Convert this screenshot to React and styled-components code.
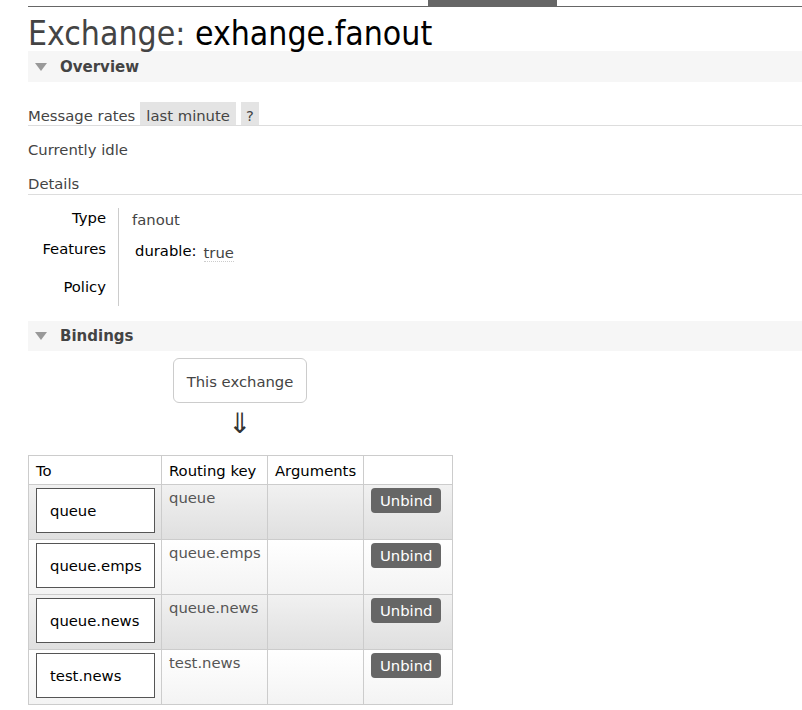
import React from 'react';
import styled, { createGlobalStyle } from 'styled-components';

const Global = createGlobalStyle`
  html, body { margin: 0; padding: 0; background: #fff; }
  body {
    font-family: "DejaVu Sans", Verdana, sans-serif;
    font-size: 14.8px;
    color: #444;
  }
  #root { overflow: hidden; }
`;

const Page = styled.div`
  padding-left: 28px;
  width: 774px;
`;

const TopBar = styled.div`
  height: 6px;
  border-bottom: 1px solid #666;
  display: flex;
`;

const ActiveTab = styled.div`
  margin-left: 400px;
  width: 129px;
  background: #666;
`;

const Title = styled.h1`
  margin: 10px 0 0;
  height: 34px;
  font-family: "DejaVu Sans Condensed", "DejaVu Sans", sans-serif;
  font-weight: normal;
  font-size: 33.5px;
  line-height: 34px;
  color: #444;
  white-space: nowrap;
`;

const Name = styled.span`
  color: #000;
`;

const SectionHeader = styled.h2`
  margin: ${p => p.$top || 0}px 0 0;
  height: ${p => p.$h || 31}px;
  display: flex;
  align-items: center;
  gap: 13px;
  padding-left: 7px;
  background: #f6f6f6;
  font-size: 15px;
  font-weight: bold;
  color: #444;
`;

const Triangle = () => (
  <svg width="12" height="8" viewBox="0 0 12 8">
    <polygon points="0,0 12,0 6,8" fill="#999" />
  </svg>
);

const RatesRow = styled.div`
  margin-top: 20px;
  display: flex;
  align-items: flex-end;
  border-bottom: 1px solid #ddd;
`;

const RatesLabel = styled.span`
  line-height: 17px;
  padding-bottom: 1px;
`;

const GrayBox = styled.span`
  margin-left: 5px;
  padding: 5px ${p => p.$pad || 6}px 1px;
  line-height: 17px;
  background: #e4e4e4;
  color: #444;
`;

const Para = styled.div`
  margin-top: ${p => p.$top}px;
  line-height: 18px;
  padding-bottom: ${p => (p.$line ? 1 : 0)}px;
  border-bottom: ${p => (p.$line ? '1px solid #ddd' : 'none')};
`;

const FactsTable = styled.table`
  margin-top: 13px;
  border-collapse: collapse;
`;

const FactRow = styled.tr`
  height: ${p => p.$h}px;
`;

const FactLabel = styled.th`
  width: 78px;
  padding: 1px 12px 0 0;
  text-align: right;
  vertical-align: top;
  font-weight: normal;
  color: #000;
  line-height: 18px;
`;

const FactValue = styled.td`
  padding: 3px 0 0 13px;
  border-left: 1px solid #ccc;
  vertical-align: top;
  line-height: 18px;
  color: #444;
`;

const FeatureKey = styled.span`
  margin-left: 3px;
  color: #000;
`;

const Abbr = styled.abbr`
  margin-left: 7px;
  position: relative;
  top: 2px;
  text-decoration: none;
  border-bottom: 1px dotted #ccc;
`;

const Source = styled.div`
  margin: 7px 0 0 145px;
  width: 134px;
  display: flex;
  flex-direction: column;
  align-items: center;
`;

const ExchangeBox = styled.div`
  box-sizing: border-box;
  width: 134px;
  height: 45px;
  border: 1px solid #ccc;
  border-radius: 6px;
  padding-top: 2px;
  display: flex;
  align-items: center;
  justify-content: center;
  color: #444;
`;

const Arrow = styled.div`
  margin-top: 6px;
  font-size: 28px;
  line-height: 30px;
  color: #333;
`;

const BindTable = styled.table`
  margin-top: 16px;
  border-collapse: collapse;
  table-layout: fixed;
  width: 424px;
`;

const HeadCell = styled.th`
  border: 1px solid #ccc;
  padding: 6px 7px 4px;
  text-align: left;
  font-weight: normal;
  color: #000;
  line-height: 18px;
  background: #fff;
`;

const BodyRow = styled.tr`
  background: ${p =>
    p.$alt
      ? 'linear-gradient(#f1f1f1, #dfdfdf)'
      : 'linear-gradient(#ffffff, #f3f3f3)'};
`;

const Cell = styled.td`
  border: 1px solid #ccc;
  padding: 3px 7px 6px;
  vertical-align: top;
  line-height: 20px;
  color: #555;
`;

const QueueBox = styled.div`
  box-sizing: border-box;
  width: 119px;
  height: 45px;
  border: 1px solid #555;
  background: #fff;
  padding-left: 13px;
  line-height: 44px;
  color: #000;
`;

const UnbindButton = styled.button`
  height: 25px;
  padding: 0 9px;
  border: none;
  border-radius: 4px;
  background: #666;
  color: #fff;
  font-family: inherit;
  font-size: 14.8px;
  line-height: 25px;
`;

const bindings = [
  { to: 'queue', key: 'queue' },
  { to: 'queue.emps', key: 'queue.emps' },
  { to: 'queue.news', key: 'queue.news' },
  { to: 'test.news', key: 'test.news' },
];

export default function App() {
  return (
    <>
      <Global />
      <Page>
        <TopBar>
          <ActiveTab />
        </TopBar>
        <Title>
          Exchange: <Name>exhange.fanout</Name>
        </Title>

        <SectionHeader>
          <Triangle />
          Overview
        </SectionHeader>

        <RatesRow>
          <RatesLabel>Message rates</RatesLabel>
          <GrayBox>last minute</GrayBox>
          <GrayBox $pad={5}>?</GrayBox>
        </RatesRow>

        <Para $top={15}>Currently idle</Para>
        <Para $top={16} $line>Details</Para>

        <FactsTable>
          <tbody>
            <FactRow $h={31}>
              <FactLabel>Type</FactLabel>
              <FactValue>fanout</FactValue>
            </FactRow>
            <FactRow $h={38}>
              <FactLabel>Features</FactLabel>
              <FactValue>
                <FeatureKey>durable:</FeatureKey>
                <Abbr title="durable">true</Abbr>
              </FactValue>
            </FactRow>
            <FactRow $h={29}>
              <FactLabel>Policy</FactLabel>
              <FactValue />
            </FactRow>
          </tbody>
        </FactsTable>

        <SectionHeader $top={15} $h={30}>
          <Triangle />
          Bindings
        </SectionHeader>

        <Source>
          <ExchangeBox>This exchange</ExchangeBox>
          <Arrow>⇓</Arrow>
        </Source>

        <BindTable>
          <colgroup>
            <col style={{ width: 133 }} />
            <col style={{ width: 106 }} />
            <col style={{ width: 96 }} />
            <col style={{ width: 89 }} />
          </colgroup>
          <thead>
            <tr>
              <HeadCell>To</HeadCell>
              <HeadCell>Routing key</HeadCell>
              <HeadCell>Arguments</HeadCell>
              <HeadCell />
            </tr>
          </thead>
          <tbody>
            {bindings.map((b, i) => (
              <BodyRow key={b.to} $alt={i % 2 === 0}>
                <Cell>
                  <QueueBox>{b.to}</QueueBox>
                </Cell>
                <Cell>{b.key}</Cell>
                <Cell />
                <Cell>
                  <UnbindButton>Unbind</UnbindButton>
                </Cell>
              </BodyRow>
            ))}
          </tbody>
        </BindTable>
      </Page>
    </>
  );
}
